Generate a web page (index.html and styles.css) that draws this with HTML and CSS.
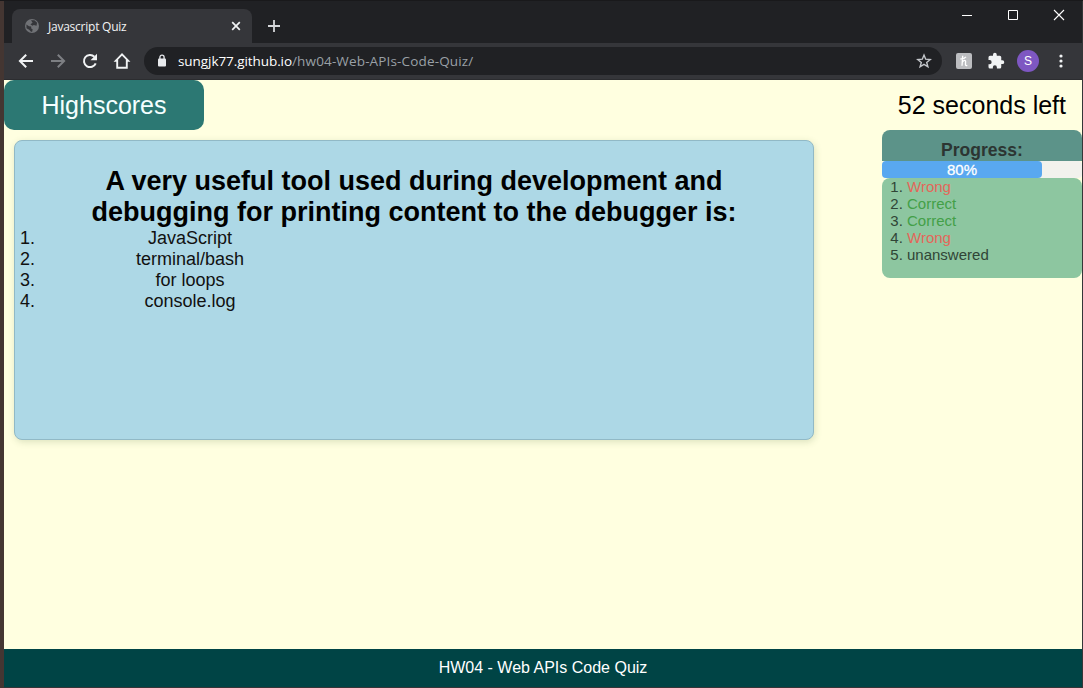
FILE: index.html
```html
<!DOCTYPE html>
<html lang="en">
<head>
<meta charset="utf-8">
<title>Javascript Quiz</title>
<link rel="stylesheet" href="styles.css">
</head>
<body>
<div class="window">
  <div class="tabstrip">
    <div class="tab">
      <svg class="globe" width="16" height="16" viewBox="0 0 16 16"><circle cx="8" cy="8" r="7" fill="#707276"/><path d="M2.4 6.4 5 8.2l2.2.4v2l1.4.6-.4 2.600H7l-1.800-2-2.700-1.500zM7 2.300h3.400l2.700 2.400-.6 3-2.700-.6-1.400.6-2-1.500 2.200-1.400z" fill="#35363a"/></svg>
      <span class="tab-title">Javascript Quiz</span>
      <svg width="10" height="10" viewBox="0 0 10 10"><path d="m1.200 1.200 7.600 7.600m0-7.600L1.200 8.800" stroke="#f1f3f4" stroke-width="1.700"/></svg>
    </div>
    <svg class="new-tab" width="14" height="14" viewBox="0 0 14 14"><path d="M7 1v12M1 7h12" stroke="#d5d7da" stroke-width="1.800"/></svg>
    <div class="window-buttons">
      <svg width="12" height="12" viewBox="0 0 12 12"><path d="M1 6.500h10" stroke="#fff"/></svg>
      <svg width="12" height="12" viewBox="0 0 12 12"><path d="M1.500 1.500h9v9h-9z" fill="none" stroke="#fff"/></svg>
      <svg width="12" height="12" viewBox="0 0 12 12"><path d="m1 1 10 10m0-10L1 11" stroke="#fff" stroke-width="1.100"/></svg>
    </div>
  </div>
  <div class="toolbar">
    <div class="nav">
      <svg width="20" height="20" viewBox="0 0 20 20"><path d="M17 10H4m6.200-6.300L3.900 10l6.300 6.300" fill="none" stroke="#f1f3f4" stroke-width="2"/></svg>
      <svg width="20" height="20" viewBox="0 0 20 20"><path d="M3 10h13M9.800 3.700 16.100 10l-6.300 6.300" fill="none" stroke="#7d7f83" stroke-width="2"/></svg>
      <svg width="20" height="20" viewBox="0 0 20 20"><path d="M15.700 12.300a6.100 6.100 0 1 1-1.300-6.600" fill="none" stroke="#f1f3f4" stroke-width="2"/><path d="M17 2.700v6.500h-6.500z" fill="#f1f3f4"/></svg>
      <svg width="20" height="20" viewBox="0 0 20 20"><path d="M10 3.300 3.800 9.700h1.400v7.100h9.600V9.700h1.400z" fill="none" stroke="#f1f3f4" stroke-width="1.900"/></svg>
    </div>
    <div class="address">
      <svg width="10" height="14" viewBox="0 0 10 14"><rect x="1" y="4.500" width="8" height="8" rx="1" fill="#e8eaed"/><path d="M2.900 5V3.300a2.100 2.100 0 0 1 4.200 0V5" fill="none" stroke="#e8eaed" stroke-width="1.300"/></svg>
      <span class="url"><span class="host">sungjk77.github.io</span><span class="path">/hw04-Web-APIs-Code-Quiz/</span></span>
      <svg class="star" width="16" height="16" viewBox="0 0 16 16"><path d="m8 2 1.700 4.200 4.500.3-3.500 2.900 1.200 4.400L8 11.400l-3.900 2.400 1.200-4.400-3.500-2.900 4.500-.3z" fill="none" stroke="#c4c7cb" stroke-width="1.400"/></svg>
    </div>
    <svg class="honey" width="16" height="16" viewBox="0 0 16 16"><rect width="16" height="16" rx="2" fill="#bcbdc0"/><path d="M6.700 2.800 6 12.800M6.300 9.300c1.300-2.400 3.400-2.600 3.300-.5 0 2-.9 4.400 1.700 3.600M4.300 5.800c2 .4 4.200-.3 5.700-1.900" fill="none" stroke="#fff" stroke-width="1.300"/></svg>
    <svg class="puzzle" width="18" height="18" viewBox="0 0 24 24"><path d="M20.500 11H19V7a2 2 0 0 0-2-2h-4V3.500a2.500 2.500 0 0 0-5 0V5H4a2 2 0 0 0-2 2v3.800h1.500a2.700 2.700 0 0 1 0 5.400H2V20a2 2 0 0 0 2 2h3.800v-1.500a2.700 2.700 0 0 1 5.400 0V22H17a2 2 0 0 0 2-2v-4h1.500a2.500 2.500 0 0 0 0-5z" fill="#f1f3f4"/></svg>
    <span class="avatar">S</span>
    <svg class="menu" width="4" height="14" viewBox="0 0 4 14"><g fill="#f1f3f4"><circle cx="2" cy="2" r="1.600"/><circle cx="2" cy="7" r="1.600"/><circle cx="2" cy="12" r="1.600"/></g></svg>
  </div>
  <div class="page">
    <header class="top">
      <div class="highscores">Highscores</div>
      <div class="timer">52 seconds left</div>
    </header>
    <main class="content">
      <section class="quiz">
        <h2 class="question">A very useful tool used during development and debugging for printing content to the debugger is:</h2>
        <ol class="answers">
          <li>JavaScript</li>
          <li>terminal/bash</li>
          <li>for loops</li>
          <li>console.log</li>
        </ol>
      </section>
      <aside class="progress">
        <h3 class="progress-title">Progress:</h3>
        <div class="track"><div class="bar">80%</div></div>
        <ol class="results">
          <li><span class="wrong">Wrong</span></li>
          <li><span class="correct">Correct</span></li>
          <li><span class="correct">Correct</span></li>
          <li><span class="wrong">Wrong</span></li>
          <li>unanswered</li>
        </ol>
      </aside>
    </main>
    <footer class="footer">HW04 - Web APIs Code Quiz</footer>
  </div>
</div>
</body>
</html>
```
FILE: styles.css
```css
* { box-sizing: border-box; }
body {
  margin: 0;
  height: 688px;
  overflow: hidden;
  background: #443632;
  font-family: "Liberation Sans", Arial, sans-serif;
}
svg { display: block; flex: none; }
h2, h3, ol { margin: 0; padding: 0; }
.window {
  height: 688px;
  padding: 0 1px 1px 4px;
  display: flex;
  flex-direction: column;
  border-top: 1px solid #19191b;
  background: linear-gradient(90deg, #443632 4px, #343638 4px);
}
.tabstrip {
  height: 42px;
  padding: 8px 0 0 8px;
  display: flex;
  background: #202124;
}
.tab {
  width: 240px;
  height: 34px;
  padding: 0 11px 0 12px;
  display: flex;
  align-items: center;
  border-radius: 8px 8px 0 0;
  background: #35363a;
}
.tab-title {
  flex: 1;
  margin-left: 8px;
  color: #f1f3f4;
  font: 12px "Open Sans", sans-serif;
  letter-spacing: -0.24px;
}
.new-tab { margin: 10px 0 0 15px; }
.window-buttons {
  display: flex;
  gap: 34px;
  margin: 0 17px 0 auto;
}
.toolbar {
  height: 37px;
  padding-left: 12px;
  display: flex;
  align-items: center;
  background: #35363a;
  border-bottom: 1px solid #2c2d30;
}
.nav { display: flex; gap: 12px; }
.address {
  width: 798px;
  height: 28px;
  margin-left: 12px;
  padding: 0 10px 0 13px;
  display: flex;
  align-items: center;
  border-radius: 14px;
  background: #202124;
}
.url {
  flex: 1;
  margin-left: 11px;
  font: 13.5px "Open Sans", sans-serif;
  white-space: nowrap;
}
.host { color: #fff; letter-spacing: -0.07px; }
.path { color: #9aa0a6; letter-spacing: 0.15px; }
.honey { margin-left: 14px; }
.puzzle { margin-left: 15px; }
.avatar {
  width: 22px;
  height: 22px;
  margin-left: 12px;
  border-radius: 50%;
  background: #7e57c2;
  color: #fff;
  font-size: 12px;
  line-height: 22px;
  text-align: center;
}
.menu { margin-left: 20px; }
.page {
  flex: 1;
  display: flex;
  flex-direction: column;
  background: #ffffe0;
  color: #000;
}
.top {
  height: 50px;
  display: flex;
  justify-content: space-between;
  font-size: 25px;
  line-height: 50px;
}
.highscores {
  width: 200px;
  border-radius: 10px;
  background: #2c7873;
  color: #f4ffff;
  text-align: center;
}
.timer { padding-right: 16px; }
.content {
  flex: 1;
  display: flex;
  justify-content: space-between;
  align-items: flex-start;
}
.quiz {
  width: 800px;
  height: 300px;
  margin: 10px 0 0 10px;
  padding-top: 25px;
  border: 1px solid #91b9c6;
  border-radius: 8px;
  background: #add8e6;
  box-shadow: 1px 2px 7px rgba(80, 110, 60, 0.2);
  font-size: 18px;
  text-align: center;
}
.question {
  padding: 0 60px;
  font-size: 27px;
  line-height: 31px;
}
.answers {
  width: 325px;
  padding-left: 25px;
  line-height: 21px;
  color: #111;
}
.progress {
  width: 200px;
  font-size: 15px;
  line-height: 17px;
}
.progress-title {
  height: 31px;
  padding-top: 10px;
  border-radius: 8px 8px 0 0;
  background: #5c9389;
  color: #2c3532;
  font-size: 17.55px;
  line-height: 20px;
  text-align: center;
}
.track {
  height: 17px;
  border-radius: 4px;
  background: #f2f2ed;
}
.bar {
  width: 80%;
  border-radius: 4px;
  background: #59a8f0;
  color: #fff;
  text-align: center;
  -webkit-text-stroke: 0.3px #fff;
}
.results {
  height: 100px;
  padding: 0 0 0 25px;
  border-radius: 8px;
  background: #8dc6a0;
  color: #304536;
}
.wrong { color: #e4675a; }
.correct { color: #43a047; }
.footer {
  height: 38px;
  background: #004445;
  color: #fff;
  font-size: 16px;
  line-height: 38px;
  text-align: center;
}
```
